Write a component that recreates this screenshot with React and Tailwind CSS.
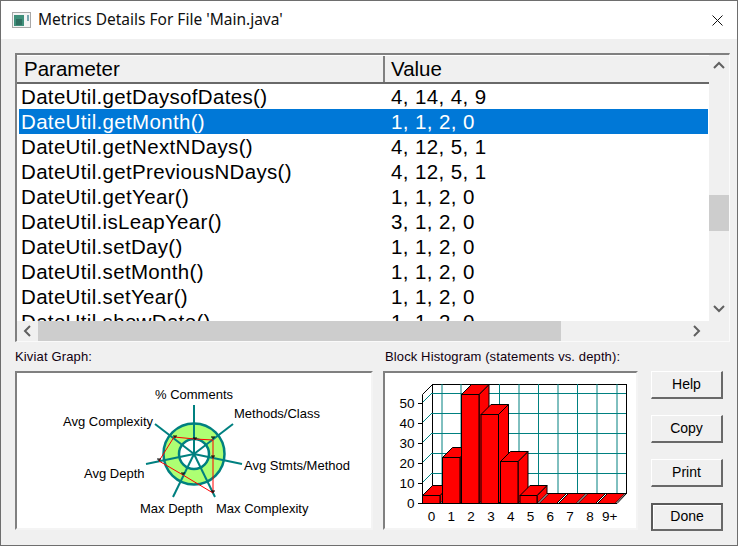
import React from 'react';

const rows = [
    ['DateUtil.getDaysofDates()', '4, 14, 4, 9'],
    ['DateUtil.getMonth()', '1, 1, 2, 0', true],
    ['DateUtil.getNextNDays()', '4, 12, 5, 1'],
    ['DateUtil.getPreviousNDays()', '4, 12, 5, 1'],
    ['DateUtil.getYear()', '1, 1, 2, 0'],
    ['DateUtil.isLeapYear()', '3, 1, 2, 0'],
    ['DateUtil.setDay()', '1, 1, 2, 0'],
    ['DateUtil.setMonth()', '1, 1, 2, 0'],
    ['DateUtil.setYear()', '1, 1, 2, 0'],
    ['DateUtil.showDate()', '1, 1, 2, 0'],
];

const TEAL = '#008080';

function Chevron({ dir }) {
    const d = {
        up: 'M1 7 L6 2 L11 7',
        down: 'M1 2 L6 7 L11 2',
        left: 'M7 1 L2 6 L7 11',
        right: 'M2 1 L7 6 L2 11',
    }[dir];
    const vertical = dir === 'up' || dir === 'down';
    return (
        <svg width={vertical ? 12 : 9} height={vertical ? 9 : 12} viewBox={vertical ? '0 0 12 9' : '0 0 9 12'} aria-hidden="true">
            <path d={d} fill="none" stroke="#606060" strokeWidth="2" />
        </svg>
    );
}

function KiviatGraph() {
    const cx = 194;
    const cy = 454;
    const spokes = [[194, 405], [233, 424], [242, 464], [215, 497], [173, 497], [146, 464], [155, 424]];
    const poly = [[195, 439], [213, 440], [213, 493], [183, 475], [159, 461], [174, 437]];
    const ticks = [[195, 439], [213, 438], [213, 457], [213, 492], [183, 474], [159, 460], [175, 437]];
    const labels = [
        ['% Comments', 155, 399],
        ['Methods/Class', 234, 418],
        ['Avg Complexity', 63, 426],
        ['Avg Stmts/Method', 244, 470],
        ['Avg Depth', 84, 478],
        ['Max Depth', 140, 513],
        ['Max Complexity', 216, 513],
    ];
    return (
        <svg width="354" height="155" viewBox="17 373 354 155" className="block">
            <circle cx={cx} cy={cy} r="23" fill="none" stroke="#adff73" strokeWidth="16" />
            <circle cx={cx} cy={cy} r="30.5" fill="none" stroke={TEAL} strokeWidth="2.5" />
            <circle cx={cx} cy={cy} r="15" fill="none" stroke={TEAL} strokeWidth="2.5" />
            {spokes.map(([x, y]) => (
                <line key={x + '-' + y} x1={cx} y1={cy} x2={x} y2={y} stroke={TEAL} strokeWidth="2" />
            ))}
            <polygon points={poly.map((p) => p.join(',')).join(' ')} fill="none" stroke="#ff0000" strokeWidth="1" />
            {ticks.map(([x, y]) => (
                <path key={x + '-' + y} d={`M${x - 2} ${y - 1} H${x + 2} M${x} ${y - 1} V${y + 1}`} stroke="#000" strokeWidth="1" />
            ))}
            {labels.map(([text, x, y]) => (
                <text key={text} x={x} y={y} fontSize="13" fill="#000" fontFamily="Liberation Sans, sans-serif">{text}</text>
            ))}
        </svg>
    );
}

function BlockHistogram() {
    const backX = [442, 461, 480, 499.5, 519, 538.5, 558, 577.5, 597, 617];
    const backY = [393, 413, 433, 453, 473];
    const bars = [
        [422.5, 440, 495.5],
        [442.5, 460, 457.5],
        [461.5, 479, 394.5],
        [481, 498.5, 414.5],
        [500.5, 518, 461.5],
        [520, 537, 495.5],
    ];
    const flat = [539, 558.5, 578, 597.5];
    const ticks = [['0', 503], ['10', 483], ['20', 463], ['30', 443], ['40', 423], ['50', 403]];
    const xLabels = ['0', '1', '2', '3', '4', '5', '6', '7', '8', '9+'];
    return (
        <svg width="251" height="155" viewBox="385 373 251 155" className="block">
            <rect x="432.5" y="384.5" width="194" height="109" fill="#fff" stroke="#000" />
            {backX.map((x) => <line key={x} x1={x} y1="384" x2={x} y2="493" stroke={TEAL} />)}
            {backY.map((y) => <line key={y} x1="432" y1={y + 0.5} x2="626" y2={y + 0.5} stroke={TEAL} />)}
            {ticks.slice(1).map(([t, y]) => <line key={t} x1="422" y1={y} x2="432" y2={y - 10} stroke={TEAL} />)}
            <path d="M432.5 384.5 L422.5 394.5 V503.5 H617 L626.5 493.5" fill="none" stroke="#000" />
            {flat.map((x) => (
                <polygon key={x} points={`${x},503.5 ${x + 17.5},503.5 ${x + 27.5},493.5 ${x + 10},493.5`} fill="#ff0000" stroke="#000" />
            ))}
            {bars.map(([x1, x2, top]) => (
                <g key={x1} stroke="#000" fill="#ff0000">
                    <polygon points={`${x2},${top} ${x2 + 10},${top - 10} ${x2 + 10},493.5 ${x2},503.5`} />
                    <polygon points={`${x1},${top} ${x1 + 10},${top - 10} ${x2 + 10},${top - 10} ${x2},${top}`} />
                    <rect x={x1} y={top} width={x2 - x1} height={503.5 - top} />
                </g>
            ))}
            {ticks.map(([t, y]) => (
                <g key={t}>
                    <line x1="418" y1={y + 0.5} x2="422" y2={y + 0.5} stroke="#000" />
                    <text x="414.5" y={y + 5} textAnchor="end" fontSize="13.5" fontFamily="Liberation Sans, sans-serif">{t}</text>
                </g>
            ))}
            {xLabels.map((t, i) => (
                <text key={t} x={431.5 + i * 19.8} y="521" textAnchor="middle" fontSize="13.5" fontFamily="Liberation Sans, sans-serif">{t}</text>
            ))}
        </svg>
    );
}

function DialogButton({ label, primary }) {
    const edge = primary
        ? 'pb-px border-2 border-[#696969] border-t-[#5a5a5a] border-l-[#5a5a5a] shadow-[inset_1px_1px_0_#fff]'
        : 'border-t border-l border-t-white border-l-white border-b-2 border-r-2 border-b-[#696969] border-r-[#696969]';
    return (
        <button className={`w-[72px] h-[28px] bg-[#f0f0f0] text-[14px] text-black ${edge}`}>
            {label}
        </button>
    );
}

export default function App() {
    return (
        <div className="w-[738px] h-[546px] bg-[#f0f0f0] border border-[#6e6e6e] flex flex-col overflow-hidden font-['Liberation_Sans',sans-serif]">
            <div className="h-[38px] shrink-0 bg-white flex items-center pl-[11px] pr-[14px]">
                <svg width="20" height="16" viewBox="0 0 20 16" aria-hidden="true">
                    <rect x="0.5" y="0.5" width="18" height="15" fill="#f4f4f4" stroke="#a8a8a8" />
                    <rect x="2" y="3" width="10" height="11" fill="#3f8f7a" />
                    <rect x="4" y="7" width="6" height="6" fill="#2f6f60" />
                    <rect x="15" y="3" width="2" height="6" fill="#7aa7b0" />
                </svg>
                <span className="ml-[6px] text-[15.5px] text-[#101010] font-['Noto_Sans',sans-serif]">Metrics Details For File 'Main.java'</span>
                <svg className="ml-auto" width="11" height="11" viewBox="0 0 11 11" aria-hidden="true">
                    <path d="M0.5 0.5 L10.5 10.5 M10.5 0.5 L0.5 10.5" stroke="#111" strokeWidth="1" />
                </svg>
            </div>

            <div className="flex-1 flex flex-col pl-[14px] pt-[14px]">
                <div className="w-[715px] h-[289px] flex border-t-2 border-l-2 border-t-[#808080] border-l-[#808080] border-r border-b border-r-[#fafafa] border-b-[#fafafa]">
                    <div className="w-[692px] flex flex-col">
                        <div className="flex-1 flex min-h-0 flex-col overflow-hidden bg-white">
                            <div className="h-[29px] shrink-0 flex bg-[#f0f0f0] border-b-2 border-b-[#696969] border-t border-t-white text-[20.5px] leading-[26px] text-black">
                                <div className="w-[368px] pl-[7px] border-r-2 border-r-[#808080]">Parameter</div>
                                <div className="pl-[6px]">Value</div>
                            </div>
                            {rows.map(([name, value, selected]) => (
                                <div key={name} className={`h-[25px] shrink-0 flex text-[20.5px] leading-[26px] ml-[2px] mr-px ${selected ? 'bg-[#0078d7] text-white' : 'text-black'}`}>
                                    <div className="w-[372px] pl-[2px] tracking-[0.33px]">{name}</div>
                                    <div className="tracking-[0.4px]">{value}</div>
                                </div>
                            ))}
                        </div>
                        <div className="h-[20px] shrink-0 flex items-stretch">
                            <div className="w-[21px] flex items-center justify-center"><Chevron dir="left" /></div>
                            <div className="w-[523px] bg-[#cdcdcd]"></div>
                            <div className="flex-1 flex items-center justify-end pr-[8px]"><Chevron dir="right" /></div>
                        </div>
                    </div>
                    <div className="flex-1 flex flex-col items-stretch">
                        <div className="h-[20px] flex items-center justify-center"><Chevron dir="up" /></div>
                        <div className="h-[120px]"></div>
                        <div className="h-[36px] bg-[#cdcdcd]"></div>
                        <div className="flex-1"></div>
                        <div className="h-[20px] mb-[23px] flex items-center justify-center"><Chevron dir="down" /></div>
                    </div>
                </div>

                <div className="flex mt-[7px]">
                    <div className="w-[358px] mr-[10px]">
                        <div className="h-[22px] text-[13px] leading-[16px] tracking-[0.15px] text-[#100010]">Kiviat Graph:</div>
                        <div className="h-[159px] bg-white border-t-2 border-l-2 border-t-[#808080] border-l-[#808080] border-r-2 border-b-2 border-r-[#f4f4f4] border-b-[#f4f4f4]">
                            <KiviatGraph />
                        </div>
                    </div>
                    <div className="w-[255px]">
                        <div className="h-[22px] pl-[2px] text-[13px] leading-[16px] tracking-[0.12px] text-[#100010] whitespace-nowrap">Block Histogram (statements vs. depth):</div>
                        <div className="h-[159px] bg-white border-t-2 border-l-2 border-t-[#808080] border-l-[#808080] border-r-2 border-b-2 border-r-[#f4f4f4] border-b-[#f4f4f4]">
                            <BlockHistogram />
                        </div>
                    </div>
                    <div className="ml-[13px] pt-[22px] flex flex-col gap-[16px]">
                        <DialogButton label="Help" />
                        <DialogButton label="Copy" />
                        <DialogButton label="Print" />
                        <DialogButton label="Done" primary />
                    </div>
                </div>
            </div>
        </div>
    );
}
